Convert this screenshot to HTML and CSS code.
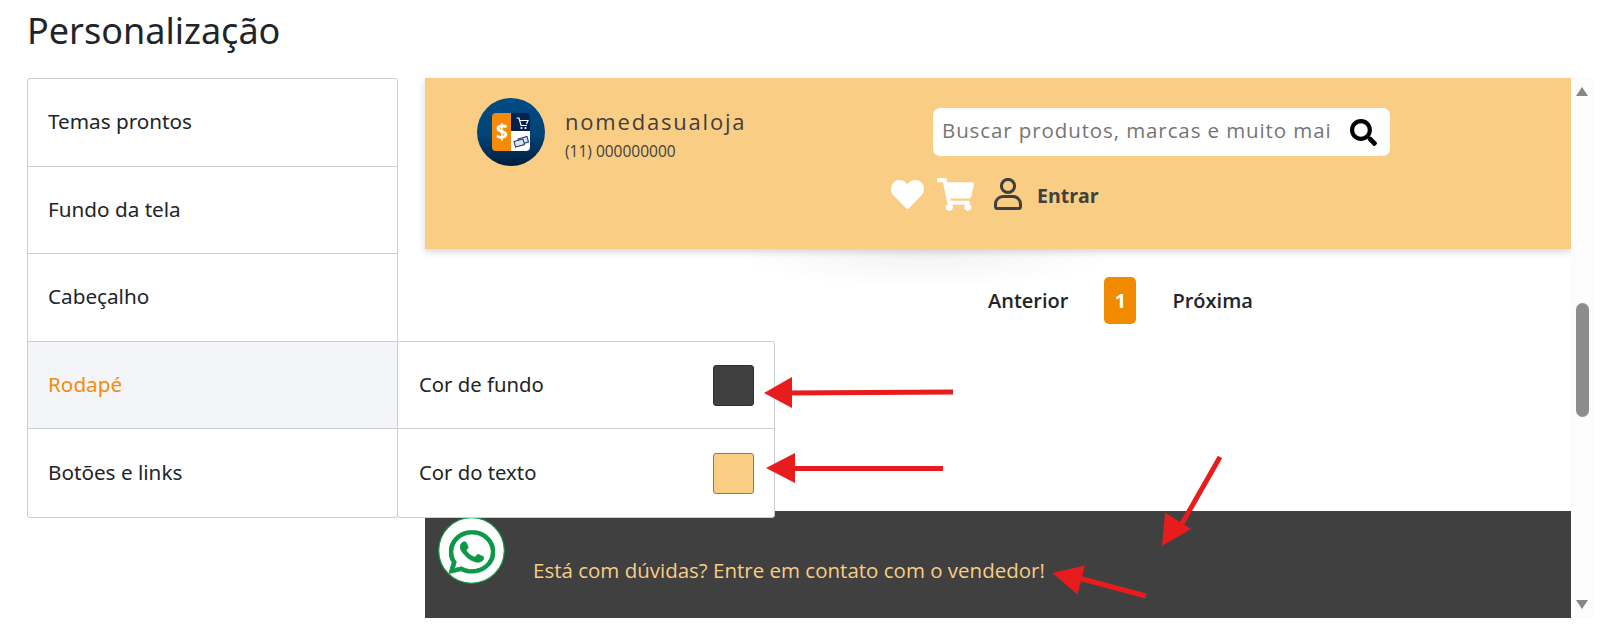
FILE: index.html
```html
<!DOCTYPE html>
<html lang="pt-BR">
  <head>
    <meta charset="utf-8" />
    <title>Personalização</title>
    <link rel="stylesheet" href="styles.css">
  </head>

  <body>
    <h1 class="page-title">Personalização</h1>

    <div class="workspace">
      <ul class="menu">
        <li class="menu-item">Temas prontos</li>
        <li class="menu-item">Fundo da tela</li>
        <li class="menu-item">Cabeçalho</li>
        <li class="menu-item menu-item-active">
          Rodapé
          <div class="flyout">
            <div class="flyout-row">
              <span>Cor de fundo</span>
              <span class="swatch swatch-dark"></span>
            </div>
            <div class="flyout-row">
              <span>Cor do texto</span>
              <span class="swatch swatch-light"></span>
            </div>
          </div>
        </li>
        <li class="menu-item">Botões e links</li>
      </ul>

      <div class="preview">
        <header class="shop-header">
          <div class="brand">
            <svg class="brand-logo" viewBox="0 0 68 68">
              <defs>
                <linearGradient id="logo-bg" x1="0" y1="0" x2="0" y2="1">
                  <stop offset="0" stop-color="#004b84" />
                  <stop offset="0.55" stop-color="#004478" />
                  <stop offset="1" stop-color="#001c3a" />
                </linearGradient>
              </defs>
              <circle cx="34" cy="34" r="34" fill="url(#logo-bg)" />
              <path d="M19 15h15v38H19a4 4 0 0 1-4-4V19a4 4 0 0 1 4-4z" fill="#f68a0b" />
              <path d="M34 15h15a4 4 0 0 1 4 4v14H34z" fill="#06214f" />
              <path d="M34 33h19v16a4 4 0 0 1-4 4H34z" fill="#fff" />
              <text x="25" y="41" class="brand-logo-sign">$</text>
              <path d="M39.500 20h2.500l2 7.500h6M42.500 22.500h8.500l-1.500 3.500" fill="none" stroke="#fff" stroke-width="1.200" />
              <circle cx="44.500" cy="30" r="1.100" fill="#fff" />
              <circle cx="48.500" cy="30" r="1.100" fill="#fff" />
              <path d="M41 41l9-2.500 1.500 5.500-9 2.500z" fill="#dfe3ee" stroke="#2c3f73" stroke-width="1.100" />
              <path d="M37 43.500l9-2.500 1.500 5.500-9 2.500z" fill="#dfe3ee" stroke="#2c3f73" stroke-width="1.100" />
            </svg>
            <div class="brand-text">
              <div class="brand-name">nomedasualoja</div>
              <div class="brand-phone">(11) 000000000</div>
            </div>
          </div>

          <div class="shop-tools">
            <div class="search">
              <input class="search-input" type="text" placeholder="Buscar produtos, marcas e muito mais" />
              <svg class="search-icon" viewBox="0 0 512 512">
                <path d="M505 442.700L405.300 343c-4.500-4.500-10.600-7-17-7H372c27.600-35.300 44-79.700 44-128C416 93.100 322.900 0 208 0S0 93.100 0 208s93.100 208 208 208c48.300 0 92.700-16.400 128-44v16.300c0 6.400 2.500 12.500 7 17l99.700 99.700c9.400 9.400 24.600 9.400 33.900 0l28.300-28.300c9.400-9.400 9.400-24.600.1-34zM208 336c-70.700 0-128-57.200-128-128 0-70.700 57.200-128 128-128 70.700 0 128 57.200 128 128 0 70.700-57.200 128-128 128z" />
              </svg>
            </div>
            <div class="shop-actions">
              <svg class="icon-heart" viewBox="0 0 512 512">
                <path d="M462.300 62.600C407.500 15.900 326 24.300 275.700 76.200L256 96.500l-19.700-20.300C186.100 24.300 104.500 15.900 49.700 62.600c-62.800 53.600-66.100 149.800-9.900 207.900l193.500 199.800c12.500 12.900 32.800 12.900 45.300 0l193.500-199.800c56.300-58.100 53-154.300-9.800-207.900z" />
              </svg>
              <svg class="icon-cart" viewBox="0 0 576 512">
                <path d="M528.120 301.319l47.273-208C578.806 78.301 567.391 64 551.990 64H159.208l-9.166-44.810C147.758 8.021 137.930 0 126.529 0H24C10.745 0 0 10.745 0 24v16c0 13.255 10.745 24 24 24h69.883l70.248 343.435C147.325 417.100 136 435.222 136 456c0 30.928 25.072 56 56 56s56-25.072 56-56c0-15.674-6.447-29.835-16.824-40h209.647C430.447 426.165 424 440.326 424 456c0 30.928 25.072 56 56 56s56-25.072 56-56c0-22.172-12.888-41.332-31.579-50.405l5.517-24.276c3.413-15.018-8.002-29.319-23.403-29.319H218.117l-6.545-32h293.145c11.206 0 20.920-7.754 23.403-18.681z" />
              </svg>
              <svg class="icon-user" viewBox="0 0 28 32">
                <circle cx="14" cy="8" r="6.600" />
                <path d="M1.500 28.500v-2.500a7.500 7.500 0 0 1 7.500-7.500h10a7.500 7.500 0 0 1 7.500 7.500v2.500a2 2 0 0 1-2 2h-21a2 2 0 0 1-2-2z" />
              </svg>
              <span class="login">Entrar</span>
            </div>
          </div>
        </header>

        <nav class="pager">
          <span>Anterior</span>
          <span class="pager-current">1</span>
          <span>Próxima</span>
        </nav>

        <footer class="shop-footer">
          <svg class="whats" viewBox="0 0 68 68">
            <circle cx="34" cy="34" r="33.300" fill="#fff" stroke="#0d9748" stroke-width="1.200" />
            <svg x="11" y="13.500" width="47" height="44" viewBox="0 32 448 448" preserveAspectRatio="none">
              <path fill="#0d9748" stroke="#0d9748" stroke-width="9" d="M380.900 97.100C339 55.100 283.200 32 223.900 32c-122.400 0-222 99.600-222 222 0 39.100 10.200 77.300 29.600 111L0 480l117.700-30.900c32.400 17.700 68.900 27 106.100 27h.1c122.300 0 224.100-99.600 224.100-222 0-59.300-25.200-115-67.100-157zm-157 341.600c-33.200 0-65.700-8.900-94-25.700l-6.700-4-69.800 18.300L72 359.200l-4.400-7c-18.500-29.400-28.200-63.300-28.200-98.200 0-101.700 82.800-184.500 184.600-184.500 49.300 0 95.600 19.200 130.400 54.100 34.800 34.900 56.200 81.200 56.100 130.500 0 101.800-84.900 184.600-186.600 184.600zm101.200-138.200c-5.500-2.800-32.800-16.200-37.900-18-5.100-1.900-8.800-2.800-12.500 2.800-3.700 5.600-14.300 18-17.600 21.800-3.200 3.700-6.500 4.200-12 1.400-32.600-16.300-54-29.100-75.500-66-5.700-9.800 5.700-9.100 16.300-30.300 1.800-3.700.9-6.900-.5-9.700-1.400-2.800-12.500-30.100-17.100-41.200-4.500-10.800-9.100-9.300-12.500-9.500-3.200-.2-6.900-.2-10.600-.2-3.700 0-9.700 1.400-14.800 6.900-5.100 5.600-19.400 19-19.400 46.300 0 27.300 19.900 53.700 22.600 57.400 2.800 3.700 39.100 59.700 94.800 83.800 35.200 15.200 49 16.500 66.600 13.900 10.700-1.600 32.800-13.400 37.400-26.400 4.600-13 4.600-24.100 3.200-26.400-1.300-2.500-5-3.900-10.500-6.600z" />
            </svg>
          </svg>
          <span class="footer-text">Está com dúvidas? Entre em contato com o vendedor!</span>
        </footer>
      </div>

      <div class="scrollbar">
        <span class="scroll-up"></span>
        <span class="scroll-thumb"></span>
        <span class="scroll-down"></span>
      </div>
    </div>

    <!-- red arrows drawn on top of the screenshot -->
    <svg class="notes" viewBox="0 0 1620 628">
      <path d="M953 392L785 393" />
      <path class="note-head" d="M764 393L792 377V408z" />
      <path d="M943 468.500H785" />
      <path class="note-head" d="M766 468L795 453V483z" />
      <path d="M1220 457L1176 534" />
      <path class="note-head" d="M1162 546L1165 512.500L1191 529z" />
      <path d="M1146 596L1075 577" />
      <path class="note-head" d="M1052.500 573L1085 565.500L1077.500 594.500z" />
    </svg>
  </body>
</html>
```

FILE: styles.css
```css
html, body {
  margin: 0;
  padding: 0;
}

body {
  position: relative;
  width: 1620px;
  height: 628px;
  overflow: hidden;
  background: #fff;
  color: #212529;
  font-family: "Noto Sans", "Open Sans", sans-serif;
}

.page-title {
  margin: 0;
  height: 78px;
  padding: 8px 0 0 27px;
  box-sizing: border-box;
  font-size: 36px;
  font-weight: 400;
  line-height: 46px;
}

.workspace {
  display: flex;
  align-items: flex-start;
  padding-left: 27px;
}

/* left menu */
.menu {
  flex: none;
  width: 371px;
  margin: 0 27px 0 0;
  padding: 0;
  list-style: none;
  box-sizing: border-box;
  border: 1px solid #cdced2;
  border-radius: 3px;
}

.menu-item {
  position: relative;
  display: flex;
  align-items: center;
  height: 87.500px;
  box-sizing: border-box;
  padding: 0 0 2px 20px;
  border-bottom: 1px solid #cdced2;
  font-size: 20.700px;
}

.menu-item:last-child {
  border-bottom: 0;
}

.menu-item-active {
  background: #f4f5f9;
  color: #f68a0b;
}

/* flyout with the colour pickers */
.flyout {
  position: absolute;
  z-index: 2;
  top: -1px;
  left: 100%;
  width: 378px;
  box-sizing: border-box;
  background: #fff;
  border: 1px solid #cdced2;
  border-radius: 3px;
  color: #212529;
  font-size: 20.300px;
}

.flyout-row {
  display: flex;
  align-items: center;
  justify-content: space-between;
  height: 87.500px;
  box-sizing: border-box;
  padding: 0 20px 2px 21px;
  border-bottom: 1px solid #cdced2;
}

.flyout-row:last-child {
  border-bottom: 0;
}

.swatch {
  width: 41px;
  height: 41px;
  margin-top: 4px;
  box-sizing: border-box;
  border-radius: 3px;
}

.swatch-dark {
  background: #404040;
  border: 1px solid #2f2f2f;
}

.swatch-light {
  background: #f9cd84;
  border: 1px solid #8f7a52;
}

/* store preview */
.preview {
  flex: none;
  display: flex;
  flex-direction: column;
  width: 1146px;
  height: 540px;
}

.shop-header {
  position: relative;
  flex: none;
  display: flex;
  height: 171px;
  box-sizing: border-box;
  padding: 20px 0 0 52px;
  background: #f9cd84;
  box-shadow: 0 3px 7px rgba(0, 0, 0, 0.16);
}

.shop-header::after {
  content: "";
  position: absolute;
  top: 100%;
  left: 300px;
  width: 400px;
  height: 40px;
  background: radial-gradient(ellipse at top, rgba(0, 0, 0, 0.05), rgba(0, 0, 0, 0) 70%);
}

.brand {
  flex: none;
  display: flex;
  width: 414px;
  height: 68px;
}

.brand-logo {
  flex: none;
  width: 68px;
  height: 68px;
}

.brand-logo-sign {
  fill: #fff;
  font-family: "Open Sans", sans-serif;
  font-size: 21px;
  font-weight: 700;
  text-anchor: middle;
}

.brand-text {
  padding: 8px 0 0 20px;
  color: #404040;
  font-family: "Open Sans", sans-serif;
}

.brand-name {
  font-size: 22px;
  line-height: 30px;
  letter-spacing: 1.800px;
}

.brand-phone {
  margin-top: 5px;
  font-size: 15.500px;
  line-height: 20px;
}

.shop-tools {
  flex: none;
  width: 499px;
  padding-top: 10px;
}

.search {
  display: flex;
  align-items: center;
  width: 457px;
  height: 48px;
  margin-left: 42px;
  box-sizing: border-box;
  padding: 0 13px 0 9px;
  background: #fff;
  border-radius: 7px;
}

.search-input {
  flex: none;
  width: 388px;
  padding: 0 0 4px;
  border: 0;
  outline: 0;
  background: transparent;
  font-family: "Open Sans", sans-serif;
  font-size: 20.500px;
  letter-spacing: 0.900px;
}

.search-input::placeholder {
  color: #757575;
  opacity: 1;
}

.search-icon {
  width: 27px;
  height: 27px;
  margin-left: 20px;
}

.shop-actions {
  display: flex;
  align-items: center;
  height: 34px;
  margin-top: 21px;
}

.icon-heart {
  width: 33px;
  height: 33px;
  fill: #fff;
}

.icon-cart {
  width: 37px;
  height: 33px;
  margin-left: 13px;
  fill: #fff;
}

.icon-user {
  width: 28px;
  height: 32px;
  margin-left: 20px;
  fill: none;
  stroke: #404040;
  stroke-width: 3;
}

.login {
  margin: 2px 0 0 15px;
  color: #404040;
  font-family: "Open Sans", sans-serif;
  font-size: 19.500px;
  font-weight: 700;
}

.pager {
  flex: none;
  display: flex;
  align-items: center;
  gap: 36px;
  height: 47px;
  margin: 28px 0 0 563px;
  font-family: "Open Sans", sans-serif;
  font-size: 20px;
  font-weight: 600;
}

.pager-current {
  display: flex;
  align-items: center;
  justify-content: center;
  width: 32px;
  height: 47px;
  background: #f28a00;
  border-radius: 5px;
  color: #fff;
  font-weight: 700;
}

.shop-footer {
  flex: none;
  display: flex;
  align-items: flex-start;
  height: 107px;
  margin-top: 187px;
  box-sizing: border-box;
  padding: 6px 0 0 13px;
  background: #404040;
}

.whats {
  flex: none;
  width: 67px;
  height: 67px;
}

.footer-text {
  margin: 39px 0 0 28px;
  color: #f9cd84;
  font-family: "Open Sans", sans-serif;
  font-size: 20.500px;
  line-height: 28px;
}

/* fake scrollbar of the preview */
.scrollbar {
  flex: none;
  position: relative;
  width: 22px;
  height: 540px;
  background: #fcfcfc;
}

.scroll-up,
.scroll-down {
  position: absolute;
  left: 5px;
  width: 0;
  height: 0;
  border-left: 6px solid transparent;
  border-right: 6px solid transparent;
}

.scroll-up {
  top: 9px;
  border-bottom: 9px solid #868686;
}

.scroll-down {
  bottom: 9px;
  border-top: 9px solid #868686;
}

.scroll-thumb {
  position: absolute;
  top: 225px;
  left: 5px;
  width: 13px;
  height: 114px;
  background: #8c8c8c;
  border-radius: 7px;
}

/* annotations */
.notes {
  position: absolute;
  z-index: 3;
  top: 0;
  left: 0;
  width: 1620px;
  height: 628px;
  fill: none;
  stroke: #e81c1c;
  stroke-width: 5;
  pointer-events: none;
}

.note-head {
  fill: #e81c1c;
  stroke: none;
}
```
